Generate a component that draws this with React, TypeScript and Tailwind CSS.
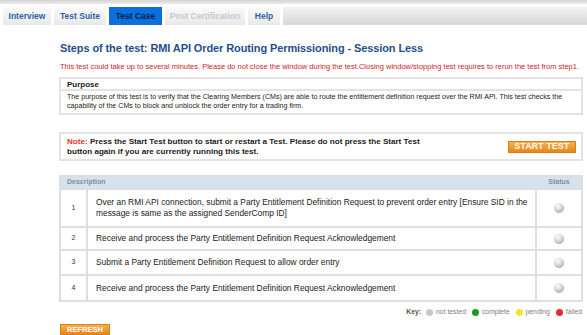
import React from "react";

const tabs = [
  { label: "Interview", w: "w-[48px]", kind: "normal" },
  { label: "Test Suite", w: "w-[52px]", kind: "normal" },
  { label: "Test Case", w: "w-[53px]", kind: "active" },
  { label: "Post Certification", w: "w-[80px]", kind: "disabled" },
  { label: "Help", w: "w-[32px]", kind: "normal" },
];

const steps = [
  {
    n: 1,
    h: "h-[38px]",
    text: "Over an RMI API connection, submit a Party Entitlement Definition Request to prevent order entry [Ensure SID in the message is same as the assigned SenderComp ID]",
  },
  { n: 2, h: "h-[23px]", text: "Receive and process the Party Entitlement Definition Request Acknowledgement" },
  { n: 3, h: "h-[25px]", text: "Submit a Party Entitlement Definition Request to allow order entry" },
  { n: 4, h: "h-[24px]", text: "Receive and process the Party Entitlement Definition Request Acknowledgement" },
];

function Ball() {
  return (
    <span className="inline-block w-[10px] h-[10px] rounded-full bg-[radial-gradient(circle_at_40%_30%,#ffffff_0%,#d4d4d4_45%,#8f8f8f_100%)]" />
  );
}

function KeyDot({ c }: { c: string }) {
  return <span className={`inline-block w-[7px] h-[7px] rounded-full ${c}`} />;
}

export default function App() {
  return (
    <div className="w-[587px] h-[335px] bg-white overflow-hidden font-['Liberation_Sans',Arial,sans-serif] text-[#222]">
      {/* top strip */}
      <div className="h-[4px] bg-gradient-to-b from-[#d4d4d4] to-[#ececec]" />
      <div className="h-[3px] bg-white" />
      {/* tabs */}
      <div className="flex h-[18px] items-stretch pl-[3px] gap-[3px]">
        {tabs.map((t) => (
          <div
            key={t.label}
            className={`${t.w} flex items-center justify-center text-[8.5px] font-bold ${
              t.kind === "active"
                ? "bg-[#0b6fe0] text-[#0d2340]"
                : t.kind === "disabled"
                ? "bg-gradient-to-b from-[#fafafa] to-[#e9e9e9] text-[#c3cbd4]"
                : "bg-gradient-to-b from-[#fafafa] to-[#e9e9e9] text-[#2f63a8]"
            }`}
          >
            {t.label}
          </div>
        ))}
        <div className="flex-1 bg-gradient-to-b from-[#f3f3f3] to-[#d8d8d8]" />
      </div>

      {/* content */}
      <div className="pl-[59px] pr-[4px]">
        <div className="mt-[15px] h-[16px] leading-[16px] text-[11px] tracking-[-0.1px] font-bold text-[#1f4f8d] whitespace-nowrap pl-[1px]">
          Steps of the test: RMI API Order Routing Permissioning - Session Less
        </div>
        <div className="mt-[5px] h-[11px] leading-[11px] text-[7.5px] text-[#d4202a] whitespace-nowrap pl-[1px]">
          This test could take up to several minutes. Please do not close the window during the test.Closing window/stopping test requires to rerun the test from step1.
        </div>

        {/* Purpose */}
        <div className="mt-[5px] border-2 border-[#e3e3e3]">
          <div className="h-[12px] leading-[12px] px-[6px] text-[8px] font-bold text-[#222] border-b-2 border-[#e3e3e3]">
            Purpose
          </div>
          <div className="px-[6px] py-[2px] text-[7.1px] leading-[9px] text-[#222]">
            The purpose of this test is to verify that the Clearing Members (CMs) are able to route the entitlement definition request over the RMI API. This test checks the capability of the CMs to block and unblock the order entry for a trading firm.
          </div>
        </div>

        {/* Note */}
        <div className="mt-[17px] border-2 border-[#e3e3e3] h-[29px] flex items-center justify-between pl-[6px] pr-[5px]">
          <div className="text-[8.1px] leading-[10px] font-bold text-[#222] w-[356px]">
            <span className="text-[#e8312a]">Note:</span> Press the Start Test button to start or restart a Test. Please do not press the Start Test button again if you are currently running this test.
          </div>
          <div className="w-[68px] h-[12px] flex items-center justify-center bg-gradient-to-b from-[#f6b048] to-[#e7871a] border border-[#d9801a] text-white text-[8.5px] font-bold tracking-[0.3px]">
            START TEST
          </div>
        </div>

        {/* Steps table */}
        <div className="mt-[14px] border-2 border-[#dedede]">
          <div className="flex h-[13px] bg-[#d5e3ee] border-b-2 border-[#dedede]">
            <div className="flex-1 flex items-center pl-[6px] text-[7px] font-bold text-[#7f8f9c]">Description</div>
            <div className="w-[46px] border-l-2 border-[#dedede] flex items-center justify-center text-[7px] font-bold text-[#7f8f9c]">
              Status
            </div>
          </div>
          {steps.map((s, i) => (
            <div key={s.n} className={`flex ${s.h} ${i < steps.length - 1 ? "border-b-2 border-[#dedede]" : ""}`}>
              <div className="w-[27px] flex items-center justify-center text-[7px] text-[#333] border-r-2 border-[#dedede]">
                {s.n}
              </div>
              <div className="flex-1 flex items-center pl-[8px] pr-[4px] text-[8.4px] leading-[11px] text-[#222]">
                {s.text}
              </div>
              <div className="w-[46px] border-l-2 border-[#dedede] flex items-center justify-center">
                <Ball />
              </div>
            </div>
          ))}
        </div>

        {/* Key */}
        <div className="mt-[4px] flex justify-end items-center gap-[3px] h-[12px] text-[6.8px] text-[#808080] pr-[1px]">
          <span className="font-bold text-[#555] mr-[2px]">Key:</span>
          <KeyDot c="bg-[#c8c8c8]" />
          <span className="mr-[3px]">not tested</span>
          <KeyDot c="bg-[#1e9a1e]" />
          <span className="mr-[3px]">complete</span>
          <KeyDot c="bg-[#f2e82a]" />
          <span className="mr-[3px]">pending</span>
          <KeyDot c="bg-[#e62a2a]" />
          <span>failed</span>
        </div>

        {/* Refresh */}
        <div className="mt-[6px] ml-[1px] w-[50px] h-[11px] flex items-center justify-center bg-gradient-to-b from-[#f6b048] to-[#e7871a] border border-[#d9801a] text-white text-[7.5px] font-bold">
          REFRESH
        </div>
      </div>
    </div>
  );
}
